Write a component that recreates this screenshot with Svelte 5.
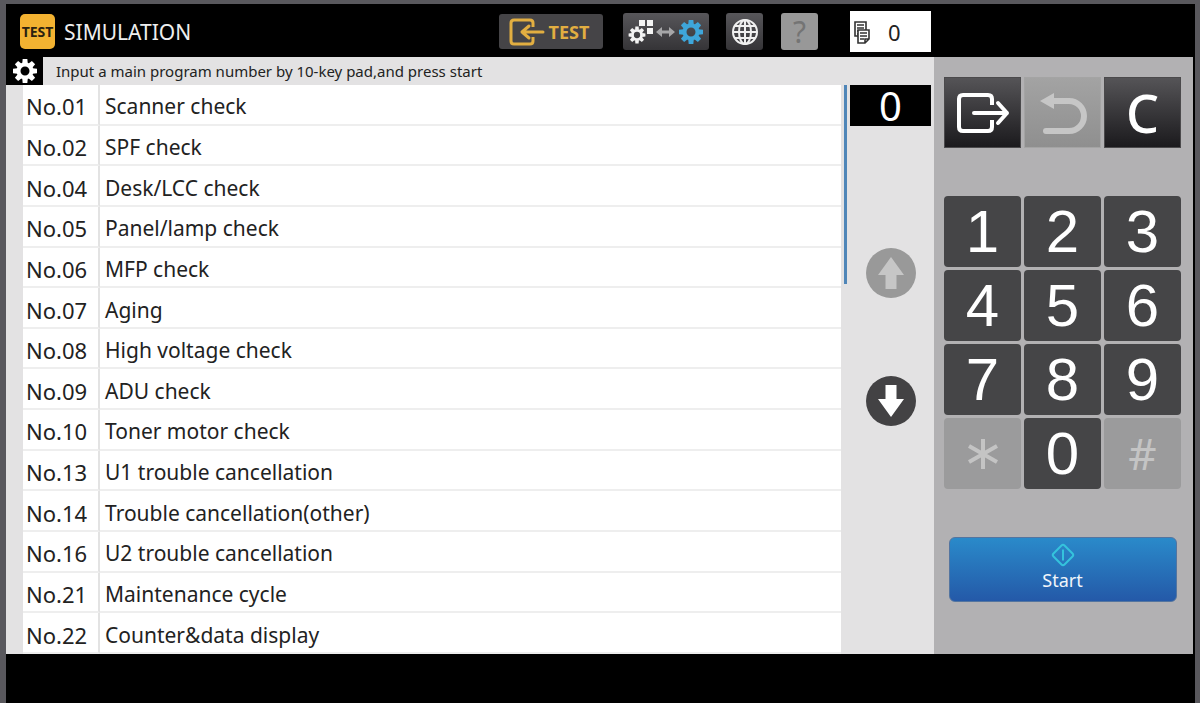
<script>
  const programs = [
    { no: "01", name: "Scanner check" },
    { no: "02", name: "SPF check" },
    { no: "04", name: "Desk/LCC check" },
    { no: "05", name: "Panel/lamp check" },
    { no: "06", name: "MFP check" },
    { no: "07", name: "Aging" },
    { no: "08", name: "High voltage check" },
    { no: "09", name: "ADU check" },
    { no: "10", name: "Toner motor check" },
    { no: "13", name: "U1 trouble cancellation" },
    { no: "14", name: "Trouble cancellation(other)" },
    { no: "16", name: "U2 trouble cancellation" },
    { no: "21", name: "Maintenance cycle" },
    { no: "22", name: "Counter&data display" }
  ];

  const keys = ["1", "2", "3", "4", "5", "6", "7", "8", "9", "*", "0", "#"];
  const teeth = [0, 45, 90, 135, 180, 225, 270, 315];

  let input = $state("");
  let copies = $state(0);

  const press = (key) => {
    if (input.length < 3) input += key;
  };

  const clear = () => input = "";
</script>

{#snippet gear()}
  <circle r="6.5" fill="none" stroke="currentColor" stroke-width="4" />
  {#each teeth as angle}
    <path d="M-2.8 -7.5 L-2.3 -12 H2.3 L2.8 -7.5 Z" fill="currentColor" transform="rotate({angle})" />
  {/each}
{/snippet}

<div class="device">
  <header class="header">
    <span class="badge">TEST</span>
    <h1 class="title">SIMULATION</h1>

    <div class="tools">
      <button class="tool tool_test">
        <svg width="36" height="28" viewBox="0 0 36 28" fill="none" stroke="currentColor" stroke-width="3" stroke-linejoin="round" aria-hidden="true">
          <path d="M24 9 V5 Q24 2 21 2 H5 Q2 2 2 5 V23 Q2 26 5 26 H21 Q24 26 24 23 V19" />
          <path d="M34 14 H13 M20 8 L13 14 L20 20" stroke-linecap="round" />
        </svg>
        TEST
      </button>

      <button class="tool tool_switch" aria-label="Switch mode">
        <svg width="76" height="28" viewBox="0 0 76 28" aria-hidden="true">
          <path d="M11 2 h6 v6 h-6z M19 2 h6 v6 h-6z M19 10 h6 v6 h-6z" fill="#f4f4f4" />
          <g color="#f4f4f4" transform="translate(9 17) scale(0.7)">{@render gear()}</g>
          <path d="M28 14 L34 9 V12.5 H41 V9 L47 14 L41 19 V15.5 H34 V19 Z" fill="#a6a6a8" />
          <g color="#3ea6da" transform="translate(63 14)">{@render gear()}</g>
        </svg>
      </button>

      <button class="tool tool_globe" aria-label="Language">
        <svg width="28" height="28" viewBox="0 0 28 28" fill="none" stroke="#f0f0f0" stroke-width="2" aria-hidden="true">
          <circle cx="14" cy="14" r="12" />
          <ellipse cx="14" cy="14" rx="6" ry="12" />
          <path d="M14 2 V26 M2 14 H26 M4 8 H24 M4 20 H24" />
        </svg>
      </button>

      <button class="tool tool_help" disabled>?</button>
    </div>

    <div class="copies">
      <svg width="17" height="24" viewBox="0 0 17 24" fill="#fff" stroke="#333" stroke-width="1.6" aria-hidden="true">
        <path d="M1 2 H12 V16 H1 Z M3 5 H10 M3 8 H10 M3 11 H10 M3 14 H6" />
        <path d="M4 10 H15 V19 L11 23 H4 Z M15 19 H11 V23 M6 13 H13 M6 16 H13 M6 19 H10" />
      </svg>
      <output>{copies}</output>
    </div>
  </header>

  <main class="workspace">
    <section class="screen">
      <div class="hint">
        <span class="hint__icon">
          <svg width="26" height="26" viewBox="-13 -13 26 26" aria-hidden="true">{@render gear()}</svg>
        </span>
        <p class="hint__text">Input a main program number by 10-key pad,and press start</p>
      </div>

      <div class="browser">
        <table class="list">
          <tbody>
            {#each programs as program}
              <tr>
                <th class="list__no" scope="row">No.{program.no}</th>
                <td class="list__name">{program.name}</td>
              </tr>
            {/each}
          </tbody>
        </table>

        <div class="track"><div class="track__thumb"></div></div>

        <div class="pager">
          <output class="pager__value">{input || "0"}</output>
          <div class="pager__buttons">
            <button class="arrow" disabled aria-label="Previous page">
              <svg width="28" height="34" viewBox="0 0 28 34" aria-hidden="true">
                <path d="M14 1 L27 19 H19.5 V33 H8.5 V19 H1 Z" fill="currentColor" />
              </svg>
            </button>
            <button class="arrow" aria-label="Next page">
              <svg width="28" height="34" viewBox="0 0 28 34" aria-hidden="true">
                <path d="M14 33 L27 15 H19.5 V1 H8.5 V15 H1 Z" fill="currentColor" />
              </svg>
            </button>
          </div>
        </div>
      </div>
    </section>

    <aside class="panel">
      <div class="keys keys_top">
        <button class="key key_exit" aria-label="Exit">
          <svg width="54" height="42" viewBox="0 0 54 42" fill="none" stroke="currentColor" stroke-width="4" stroke-linejoin="round" aria-hidden="true">
            <path d="M36 13 V7 Q36 3 32 3 H7 Q3 3 3 7 V35 Q3 39 7 39 H32 Q36 39 36 35 V28" />
            <path d="M18 21 H51 M42 11 L51 21 L42 31" stroke-linecap="round" />
          </svg>
        </button>
        <button class="key key_back" disabled aria-label="Back">
          <svg width="48" height="44" viewBox="0 0 48 44" aria-hidden="true">
            <path d="M13 10 H30 A15 15 0 0 1 30 40 H7" fill="none" stroke="currentColor" stroke-width="6" stroke-linecap="round" />
            <path d="M1 10 L15 2 V18 Z" fill="currentColor" />
          </svg>
        </button>
        <button class="key key_clear" onclick={clear}>C</button>
      </div>

      <div class="keys">
        {#each keys as key}
          {#if key === "*"}
            <button class="key key_symbol" disabled aria-label="Asterisk">
              <svg width="32" height="30" viewBox="0 0 32 30" fill="none" stroke="currentColor" stroke-width="4" aria-hidden="true">
                <path d="M16 0 V30 M2 7 L30 23 M30 7 L2 23" />
              </svg>
            </button>
          {:else}
            <button class="key" class:key_symbol={key === "#"} disabled={key === "#"} onclick={() => press(key)}>{key}</button>
          {/if}
        {/each}
      </div>

      <button class="start">
        <svg width="24" height="24" viewBox="0 0 24 24" fill="none" stroke="#35c3dc" stroke-width="2" stroke-linejoin="round" aria-hidden="true">
          <path d="M10.5 2.5 Q12 1 13.5 2.5 L21.5 10.5 Q23 12 21.5 13.5 L13.5 21.5 Q12 23 10.5 21.5 L2.5 13.5 Q1 12 2.5 10.5 Z M12 6.5 V17.5" />
        </svg>
        Start
      </button>
    </aside>
  </main>
</div>

<style>
  :global(body) {
    background: #59585d;
  }

  .device {
    display: flex;
    flex-direction: column;
    box-sizing: border-box;
    min-height: 100vh;
    border: solid #59585d;
    border-width: 4px 5px 0 6px;
    padding-bottom: 49px;
    background: #000;
    color: #222;
    font-family: "Noto Sans", "Liberation Sans", sans-serif;
  }

  button {
    box-sizing: border-box;
    padding: 0;
    border: 0;
    font: inherit;
    color: inherit;
    cursor: pointer;
  }

  button:disabled {
    cursor: default;
  }

  svg {
    display: block;
    flex: none;
  }

  .header {
    display: flex;
    align-items: center;
    box-sizing: border-box;
    height: 53px;
    padding: 2px 264px 0 14px;
  }

  .badge {
    width: 35px;
    border-radius: 5px;
    background: #f3b231;
    color: #2b2110;
    font-size: 14px;
    font-weight: bold;
    line-height: 35px;
    text-align: center;
  }

  .title {
    margin: 0 0 0 9px;
    color: #eee;
    font-size: 21px;
    font-weight: normal;
  }

  .tools {
    display: flex;
    align-items: center;
    margin-left: auto;
  }

  .tool {
    display: flex;
    align-items: center;
    justify-content: center;
    width: 37px;
    height: 37px;
    border-radius: 3px;
    background: linear-gradient(#57565a, #353437);
  }

  .tool_test {
    gap: 4px;
    width: 104px;
    height: 35px;
    margin-right: 20px;
    padding-right: 4px;
    background: #454447;
    color: #e2ae41;
    font-size: 18px;
    font-weight: bold;
  }

  .tool_switch {
    width: 86px;
    margin-right: 17px;
  }

  .tool_globe {
    margin-right: 18px;
  }

  .tool_help {
    margin-right: 32px;
    background: #989898;
    color: #747474;
    font-size: 30px;
  }

  .copies {
    display: flex;
    align-items: center;
    box-sizing: border-box;
    width: 81px;
    height: 41px;
    padding-left: 4px;
    gap: 17px;
    background: #fff;
    font-size: 22px;
  }

  .workspace {
    display: flex;
    flex: 1;
    margin-right: 2px;
  }

  .screen {
    display: flex;
    flex: 1;
    flex-direction: column;
    background: #e3e2e3;
  }

  .hint {
    display: flex;
    align-items: center;
    height: 28px;
  }

  .hint__icon {
    display: flex;
    align-items: center;
    justify-content: center;
    width: 37px;
    height: 28px;
    background: #000;
    color: #fff;
  }

  .hint__text {
    margin: 0 0 0 13px;
    font-size: 15px;
    line-height: 30px;
  }

  .browser {
    display: grid;
    flex: 1;
    grid-template-columns: 1fr 3px 81px;
    column-gap: 3px;
    padding: 0 3px 0 17px;
  }

  .list {
    width: 100%;
    height: 100%;
    border-spacing: 0;
    background: #fff;
    font-size: 21px;
    line-height: 30px;
    text-align: left;
  }

  .list th,
  .list td {
    padding: 4px 0 0 5px;
    border-bottom: 2px solid #eee;
    font-weight: normal;
  }

  .list .list__no {
    box-sizing: border-box;
    width: 77px;
    padding-left: 3px;
    border-right: 2px solid #e3e3e3;
    font-size: 22px;
  }

  .track__thumb {
    height: 35%;
    background: #4f86b8;
  }

  .pager {
    text-align: center;
  }

  .pager__value {
    display: block;
    background: #000;
    color: #fff;
    font-size: 40px;
    line-height: 41px;
  }

  .pager__buttons {
    display: flex;
    flex-direction: column;
    align-items: center;
    gap: 78px;
    margin-top: 122px;
  }

  .arrow {
    display: flex;
    align-items: center;
    justify-content: center;
    width: 50px;
    height: 50px;
    border-radius: 50%;
    background: #434244;
    color: #fff;
  }

  .arrow:disabled {
    background: #999;
    color: #c6c6c6;
  }

  .panel {
    box-sizing: border-box;
    width: 259px;
    padding: 20px 12px 0 10px;
    background: #b2b1b3;
  }

  .keys {
    display: grid;
    grid-template-columns: repeat(3, 1fr);
    gap: 3px;
  }

  .keys_top {
    margin-bottom: 48px;
  }

  .key {
    display: flex;
    align-items: center;
    justify-content: center;
    height: 71px;
    border-radius: 4px;
    background: #454547;
    color: #fff;
    font-family: "Liberation Sans", Arial, sans-serif;
    font-size: 60px;
    line-height: 71px;
  }

  .keys_top .key {
    border: 1px solid #4b4a4c;
    border-radius: 0;
    background: linear-gradient(#555457, #1b1a1d);
  }

  .key_symbol {
    background: #9b9b9c;
    color: #c4c4c4;
    font-family: "Noto Sans", sans-serif;
    font-size: 44px;
  }

  .keys_top .key_back {
    border-color: #a4a4a4;
    background: linear-gradient(#a3a3a3, #8f8f8f);
    color: #c6c6c6;
  }

  .key_clear {
    font-family: "Noto Sans", sans-serif;
    font-size: 52px;
    font-weight: 500;
  }

  .start {
    display: flex;
    flex-direction: column;
    align-items: center;
    justify-content: center;
    width: 228px;
    height: 65px;
    margin: 48px auto 0;
    padding-bottom: 4px;
    border: 1px solid #5475a0;
    border-radius: 6px;
    background: linear-gradient(#2a8aca, #2459a8);
    color: #f1f5fa;
    font-size: 18px;
    line-height: 26px;
  }
</style>
